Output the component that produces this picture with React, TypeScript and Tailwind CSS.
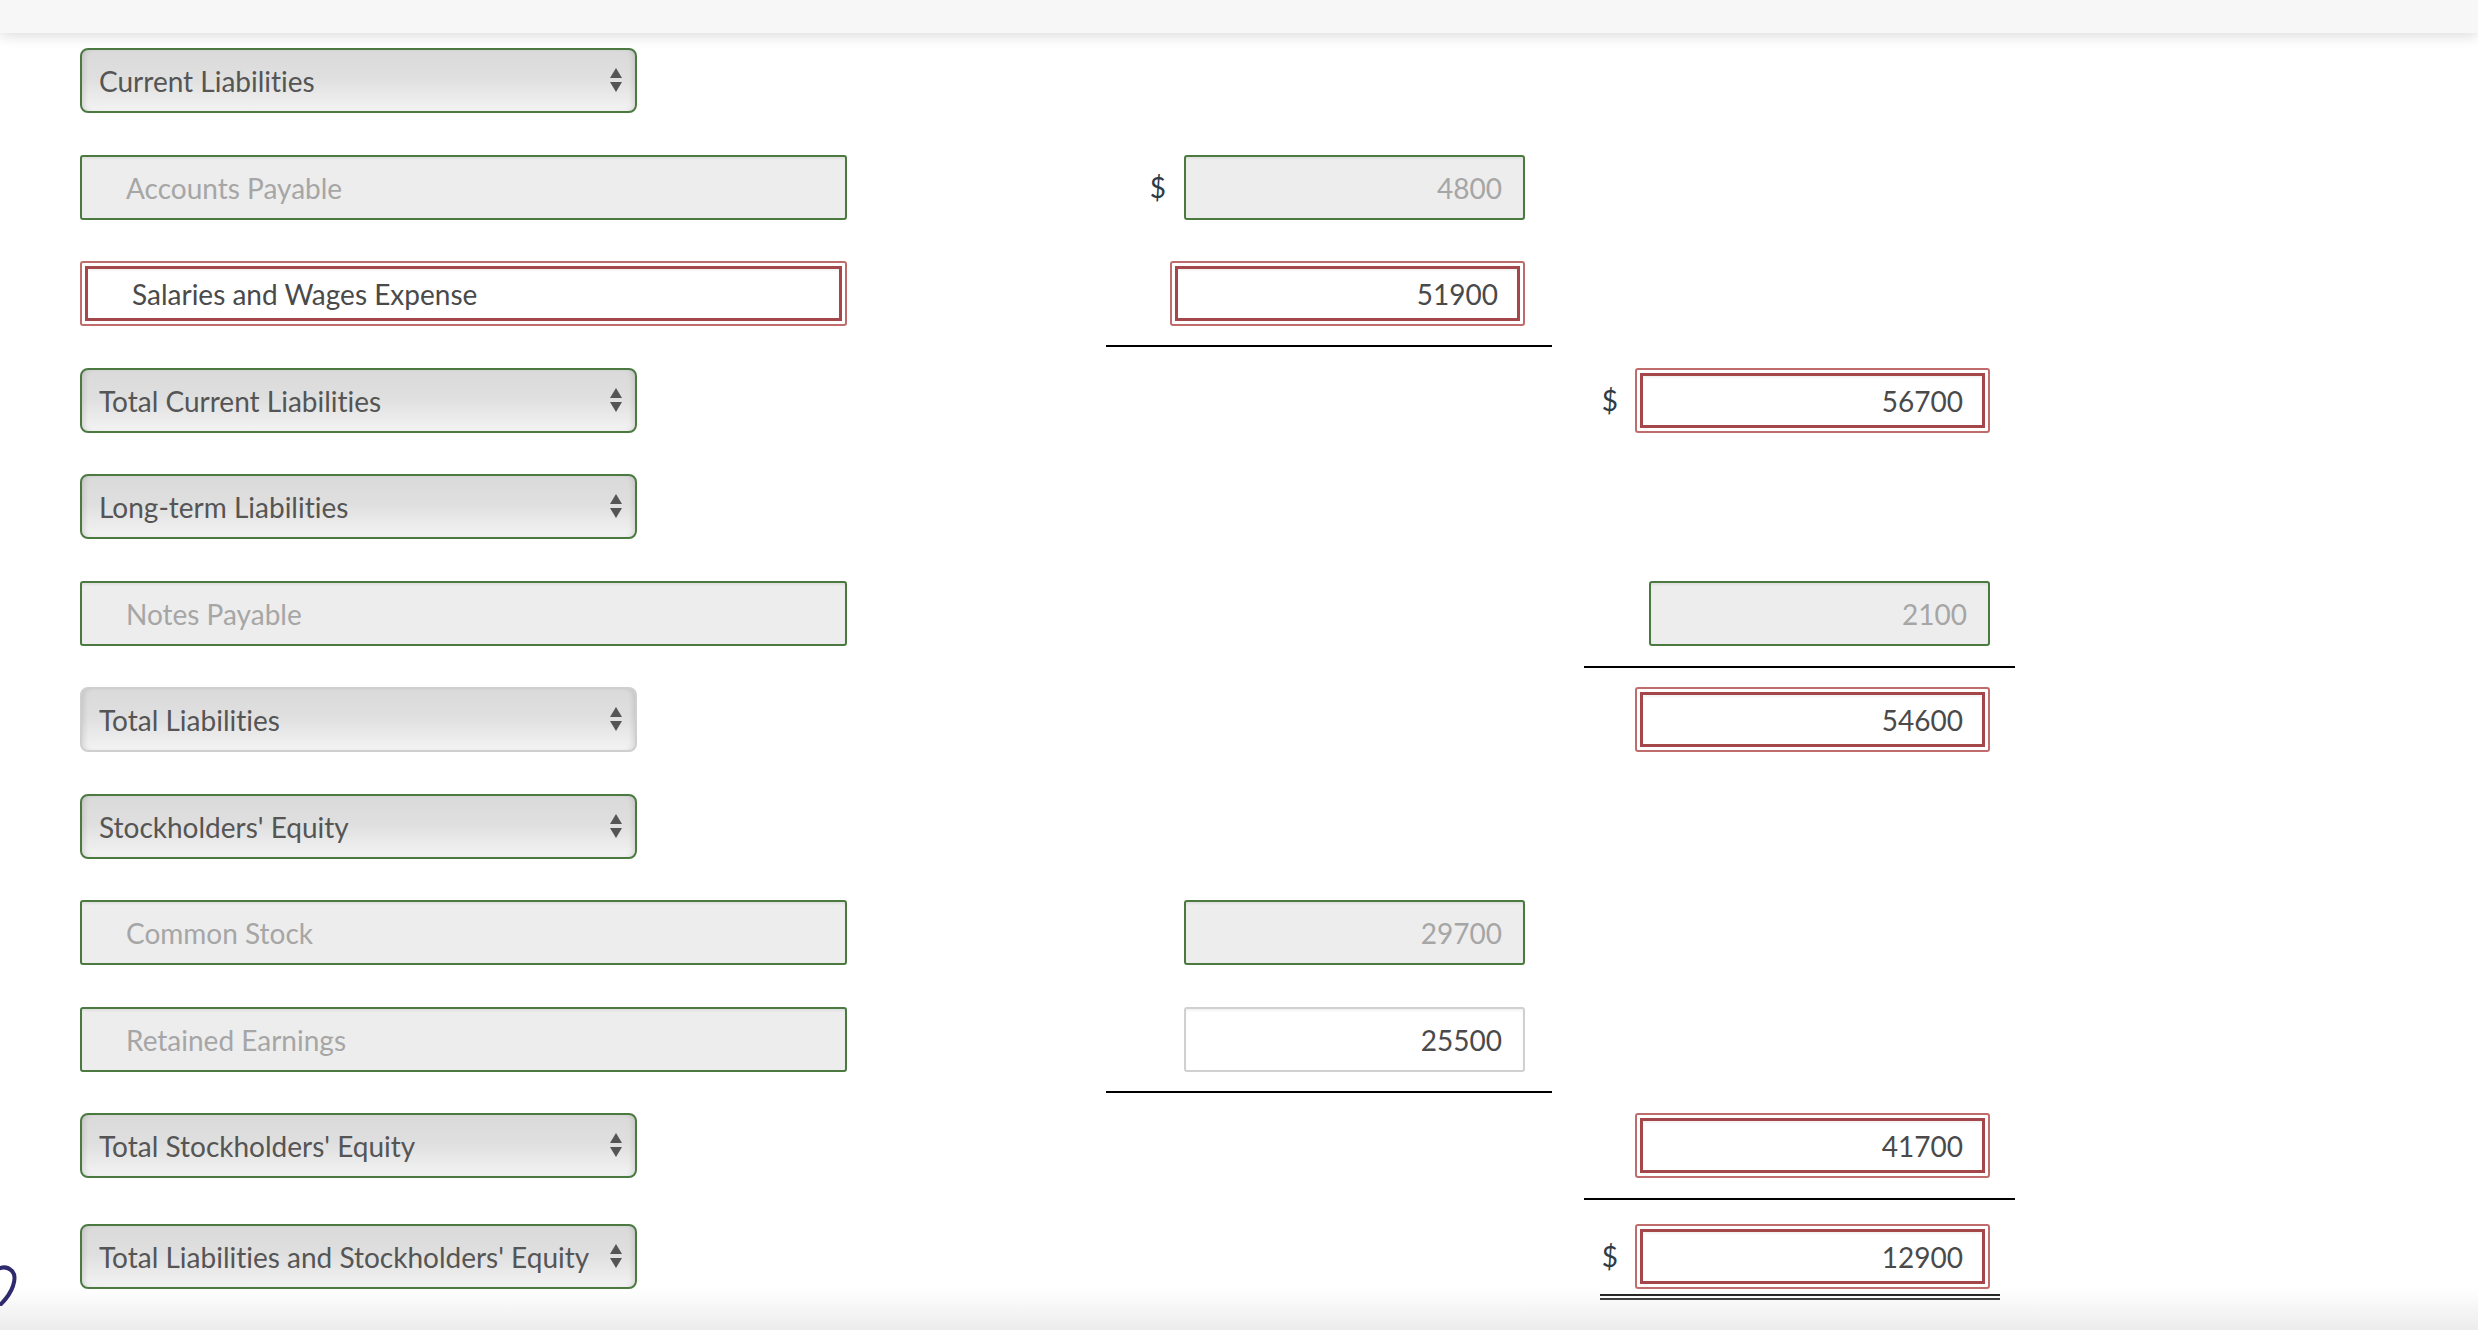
import React from 'react';

type LabelKind = 'select' | 'select-gray' | 'input' | 'input-red';
type BoxKind = 'green' | 'red' | 'plain';

interface Amount {
  kind: BoxKind;
  value: string;
  dollar?: boolean;
}

interface Row {
  kind: LabelKind;
  label: string;
  c1?: Amount;
  c2?: Amount;
  line1?: boolean;
  line2?: 'single' | 'double';
}

const rows: Row[] = [
  { kind: 'select', label: 'Current Liabilities' },
  { kind: 'input', label: 'Accounts Payable', c1: { kind: 'green', value: '4800', dollar: true } },
  { kind: 'input-red', label: 'Salaries and Wages Expense', c1: { kind: 'red', value: '51900' }, line1: true },
  { kind: 'select', label: 'Total Current Liabilities', c2: { kind: 'red', value: '56700', dollar: true } },
  { kind: 'select', label: 'Long-term Liabilities' },
  { kind: 'input', label: 'Notes Payable', c2: { kind: 'green', value: '2100' }, line2: 'single' },
  { kind: 'select-gray', label: 'Total Liabilities', c2: { kind: 'red', value: '54600' } },
  { kind: 'select', label: "Stockholders' Equity" },
  { kind: 'input', label: 'Common Stock', c1: { kind: 'green', value: '29700' } },
  { kind: 'input', label: 'Retained Earnings', c1: { kind: 'plain', value: '25500' }, line1: true },
  { kind: 'select', label: "Total Stockholders' Equity", c2: { kind: 'red', value: '41700' }, line2: 'single' },
  {
    kind: 'select',
    label: "Total Liabilities and Stockholders' Equity",
    c2: { kind: 'red', value: '12900', dollar: true },
    line2: 'double',
  },
];

const SelectArrows = () => (
  <svg width="12" height="25" viewBox="0 0 12 25" className="shrink-0">
    <polygon points="6,0 12,10 0,10" fill="#555555" />
    <polygon points="0,14 12,14 6,24" fill="#555555" />
  </svg>
);

const Label: React.FC<{ kind: LabelKind; text: string }> = ({ kind, text }) => {
  if (kind === 'select' || kind === 'select-gray') {
    return (
      <div
        className={`flex h-[65px] w-[557px] items-center justify-between rounded-[8px] border-2 pl-[17px] pr-[13px] bg-[linear-gradient(to_bottom,#dadada_0%,#dfdfdf_45%,#f3f3f3_100%)] shadow-[inset_5px_0_6px_-4px_rgba(0,0,0,0.14),inset_-5px_0_6px_-4px_rgba(0,0,0,0.14)] ${
          kind === 'select' ? 'border-[#4b7a40]' : 'border-[#cfcfcf]'
        }`}
      >
        <span className="pt-[1px] text-[28px] text-[#555555] whitespace-nowrap">{text}</span>
        <SelectArrows />
      </div>
    );
  }
  if (kind === 'input-red') {
    return (
      <div className="h-[65px] w-[767px] rounded-[3px] border-2 border-[#bf6c6c] bg-white p-[3px]">
        <div className="flex h-full items-center border-[3px] border-[#a3474a] pl-[44px] shadow-[inset_0_2px_2px_rgba(0,0,0,0.05)]">
          <span className="pt-[1px] text-[28px] text-[#4a4a4a]">{text}</span>
        </div>
      </div>
    );
  }
  return (
    <div className="flex h-[65px] w-[767px] items-center rounded-[3px] border-2 border-[#4b7a40] bg-[#ededed] pl-[44px] shadow-[inset_0_2px_2px_rgba(0,0,0,0.05)]">
      <span className="pt-[1px] text-[28px] text-[#a6a6a6]">{text}</span>
    </div>
  );
};

const AmountBox: React.FC<{ amount: Amount }> = ({ amount }) => {
  if (amount.kind === 'red') {
    return (
      <div className="h-[65px] w-[355px] rounded-[3px] border-2 border-[#bf6c6c] bg-white p-[3px]">
        <div className="flex h-full items-center justify-end border-[3px] border-[#a3474a] pr-[19px] shadow-[inset_0_2px_2px_rgba(0,0,0,0.05)]">
          <span className="pt-[1px] text-[28px] text-[#4a4a4a]">{amount.value}</span>
        </div>
      </div>
    );
  }
  const green = amount.kind === 'green';
  return (
    <div
      className={`flex h-[65px] w-[341px] items-center justify-end rounded-[3px] border-2 pr-[21px] shadow-[inset_0_2px_2px_rgba(0,0,0,0.05)] ${
        green ? 'border-[#4b7a40] bg-[#ededed]' : 'border-[#d0d0d0] bg-white'
      }`}
    >
      <span className={`pt-[1px] text-[28px] ${green ? 'text-[#a6a6a6]' : 'text-[#4a4a4a]'}`}>{amount.value}</span>
    </div>
  );
};

const Dollar = () => <span className="text-[28px] text-[#2d3b45]">$</span>;

const App: React.FC = () => {
  return (
    <div className="relative h-[1330px] overflow-hidden bg-white font-['Lato','Open_Sans',sans-serif] [font-variant-ligatures:none]">
      <div className="relative z-10 h-[33px] bg-[#f7f7f7] shadow-[0_3px_14px_rgba(0,0,0,0.14)]" />

      <div className="pl-[80px] pt-[15px]">
        {rows.map((row, i) => (
          <div key={i} className={`flex ${i === rows.length - 1 ? 'mt-[4px] h-[110px]' : 'h-[106.5px]'}`}>
            <div className="w-[1026px] shrink-0">
              <Label kind={row.kind} text={row.label} />
            </div>

            <div className="flex w-[446px] shrink-0 flex-col">
              <div className="flex h-[65px] items-center justify-end pr-[27px]">
                {row.c1?.dollar && (
                  <span className="mr-[18px]">
                    <Dollar />
                  </span>
                )}
                {row.c1 && <AmountBox amount={row.c1} />}
              </div>
              {row.line1 && <div className="mt-[19px] h-[2px] bg-black" />}
            </div>

            <div className="w-[32px] shrink-0" />

            <div className="flex w-[431px] shrink-0 flex-col">
              <div className="flex h-[65px] items-center justify-end pr-[25px]">
                {row.c2?.dollar && (
                  <span className="mr-[17px]">
                    <Dollar />
                  </span>
                )}
                {row.c2 && <AmountBox amount={row.c2} />}
              </div>
              {row.line2 === 'single' && <div className="mt-[20px] h-[2px] bg-black" />}
              {row.line2 === 'double' && (
                <div className="ml-[16px] mr-[15px] mt-[5px] h-[6px] border-y-2 border-black" />
              )}
            </div>
          </div>
        ))}
      </div>

      <div className="pointer-events-none absolute bottom-0 left-0 right-0 h-[42px] bg-gradient-to-b from-transparent to-[#ececec]" />

      <svg className="absolute left-0 top-[1262px]" width="20" height="48" viewBox="0 0 20 48">
        <path
          d="M-2 7 C4 4, 9 6, 12 9 C15 12, 15 18, 13 24 C11 30, 7 36, 1 42"
          fill="none"
          stroke="#2f2a6e"
          strokeWidth="4"
          strokeLinecap="round"
        />
      </svg>
    </div>
  );
};

export default App;
